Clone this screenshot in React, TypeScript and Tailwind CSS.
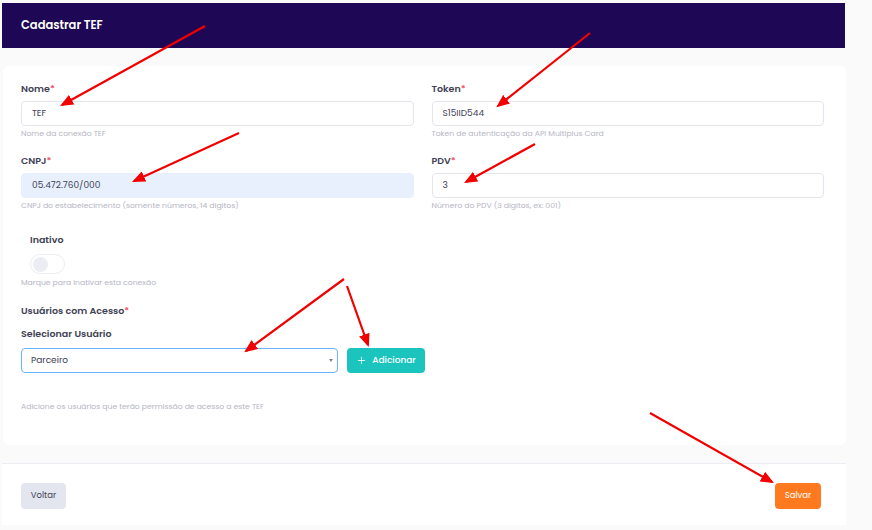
import { Plus } from "lucide-react";

const font = { fontFamily: "Poppins, Inter, 'Noto Sans', sans-serif" };

function Field({
  label,
  value,
  help,
  filled,
}: {
  label: string;
  value: string;
  help: string;
  filled?: boolean;
}) {
  return (
    <div className="flex flex-col">
      <label className="text-[9.5px] leading-[12px] font-semibold text-[#3f4254]">
        {label}
        <span className="text-[#f64e60]">*</span>
      </label>
      <div
        className={`mt-[6px] h-[25px] rounded-[4px] border flex items-center px-[10px] text-[9px] text-[#3f4254] ${
          filled ? "bg-[#e8f0fe] border-[#e8f0fe]" : "bg-white border-[#e4e6ef]"
        }`}
      >
        {value}
      </div>
      <p className="mt-[3px] text-[7.7px] leading-[10px] text-[#b5b5c3]">{help}</p>
    </div>
  );
}

function Arrows() {
  const arrows = [
    [205, 26, 62, 105],
    [590, 33, 498, 106],
    [239, 133, 134, 181],
    [535, 144, 466, 182],
    [344, 279, 246, 351],
    [347, 286, 368, 345],
    [650, 413, 772, 482],
  ];
  return (
    <svg className="absolute inset-0 pointer-events-none" width="872" height="530">
      <defs>
        <marker id="head" markerWidth="6" markerHeight="5" refX="5" refY="2.5" orient="auto" markerUnits="strokeWidth">
          <path d="M0,0 L6,2.5 L0,5 Z" fill="#f20000" />
        </marker>
      </defs>
      {arrows.map(([x1, y1, x2, y2], i) => (
        <line
          key={i}
          x1={x1}
          y1={y1}
          x2={x2}
          y2={y2}
          stroke="#f20000"
          strokeWidth="2.2"
          markerEnd="url(#head)"
        />
      ))}
    </svg>
  );
}

export default function App() {
  return (
    <div className="relative w-[872px] h-[530px] bg-[#fafafb] overflow-hidden" style={font}>
      {/* Header */}
      <div className="ml-[2px] mt-[3px] w-[843px] h-[45px] bg-[#1e0856] flex items-center pl-[19px]">
        <h1 className="text-[11.5px] font-semibold text-white">Cadastrar TEF</h1>
      </div>

      {/* Form card */}
      <div className="ml-[3px] mt-[18px] w-[843px] h-[379px] bg-white rounded-[6px] pl-[18px] pr-[22px] pt-[17px]">
        <div className="grid grid-cols-2 gap-x-[18px]">
          <div className="flex flex-col gap-[16px]">
            <Field label="Nome" value="TEF" help="Nome da conexão TEF" />
            <Field
              label="CNPJ"
              value="05.472.760/000"
              help="CNPJ do estabelecimento (somente números, 14 digitos)"
              filled
            />
          </div>
          <div className="flex flex-col gap-[16px]">
            <Field label="Token" value="S15IID544" help="Token de autenticação da API Multiplus Card" />
            <Field label="PDV" value="3" help="Número do PDV (3 digitos, ex: 001)" />
          </div>
        </div>

        {/* Inativo */}
        <div className="mt-[23px] flex flex-col">
          <span className="ml-[9px] text-[9.5px] leading-[12px] font-semibold text-[#3f4254]">Inativo</span>
          <div className="ml-[9px] mt-[8px] w-[35px] h-[20px] rounded-full border border-[#ebedf3] bg-white flex items-center px-[2px]">
            <div className="w-[15px] h-[15px] rounded-full bg-[#ebedf3]" />
          </div>
          <p className="mt-[4px] text-[7.7px] leading-[10px] text-[#b5b5c3]">Marque para inativar esta conexão</p>
        </div>

        {/* Usuários */}
        <div className="mt-[17px] flex flex-col">
          <span className="text-[9.5px] leading-[12px] font-semibold text-[#3f4254]">
            Usuários com Acesso<span className="text-[#f64e60]">*</span>
          </span>
          <span className="mt-[11px] text-[9.5px] leading-[12px] font-semibold text-[#3f4254]">Selecionar Usuário</span>
          <div className="mt-[8px] flex gap-[9px]">
            <div className="w-[317px] h-[25px] rounded-[4px] border border-[#69b3ff] bg-white flex items-center justify-between pl-[9px] pr-[4px] text-[9px] text-[#3f4254]">
              <span>Parceiro</span>
              <span className="w-0 h-0 border-l-[2.5px] border-r-[2.5px] border-t-[3px] border-l-transparent border-r-transparent border-t-[#7e8299]" />
            </div>
            <button className="w-[78px] h-[25px] rounded-[4px] bg-[#1bc5bd] flex items-center justify-center gap-[5px] text-white text-[9px] font-medium">
              <Plus size={11} strokeWidth={1.8} />
              Adicionar
            </button>
          </div>
          <p className="mt-[29px] text-[7.7px] leading-[10px] text-[#b5b5c3]">
            Adicione os usuários que terão permissão de acesso a este TEF
          </p>
        </div>
      </div>

      {/* Footer */}
      <div className="ml-[2px] mt-[18px] w-[844px] h-[62px] bg-white border-t border-[#ebedf3] flex items-center justify-between pl-[19px] pr-[25px] pt-[2px]">
        <button className="w-[45px] h-[26px] rounded-[4px] bg-[#e4e6ef] text-[#3f4254] text-[8.5px]">Voltar</button>
        <button className="w-[46px] h-[26px] rounded-[4px] bg-[#ff7a1e] text-white text-[8.5px]">Salvar</button>
      </div>

      <Arrows />
    </div>
  );
}
